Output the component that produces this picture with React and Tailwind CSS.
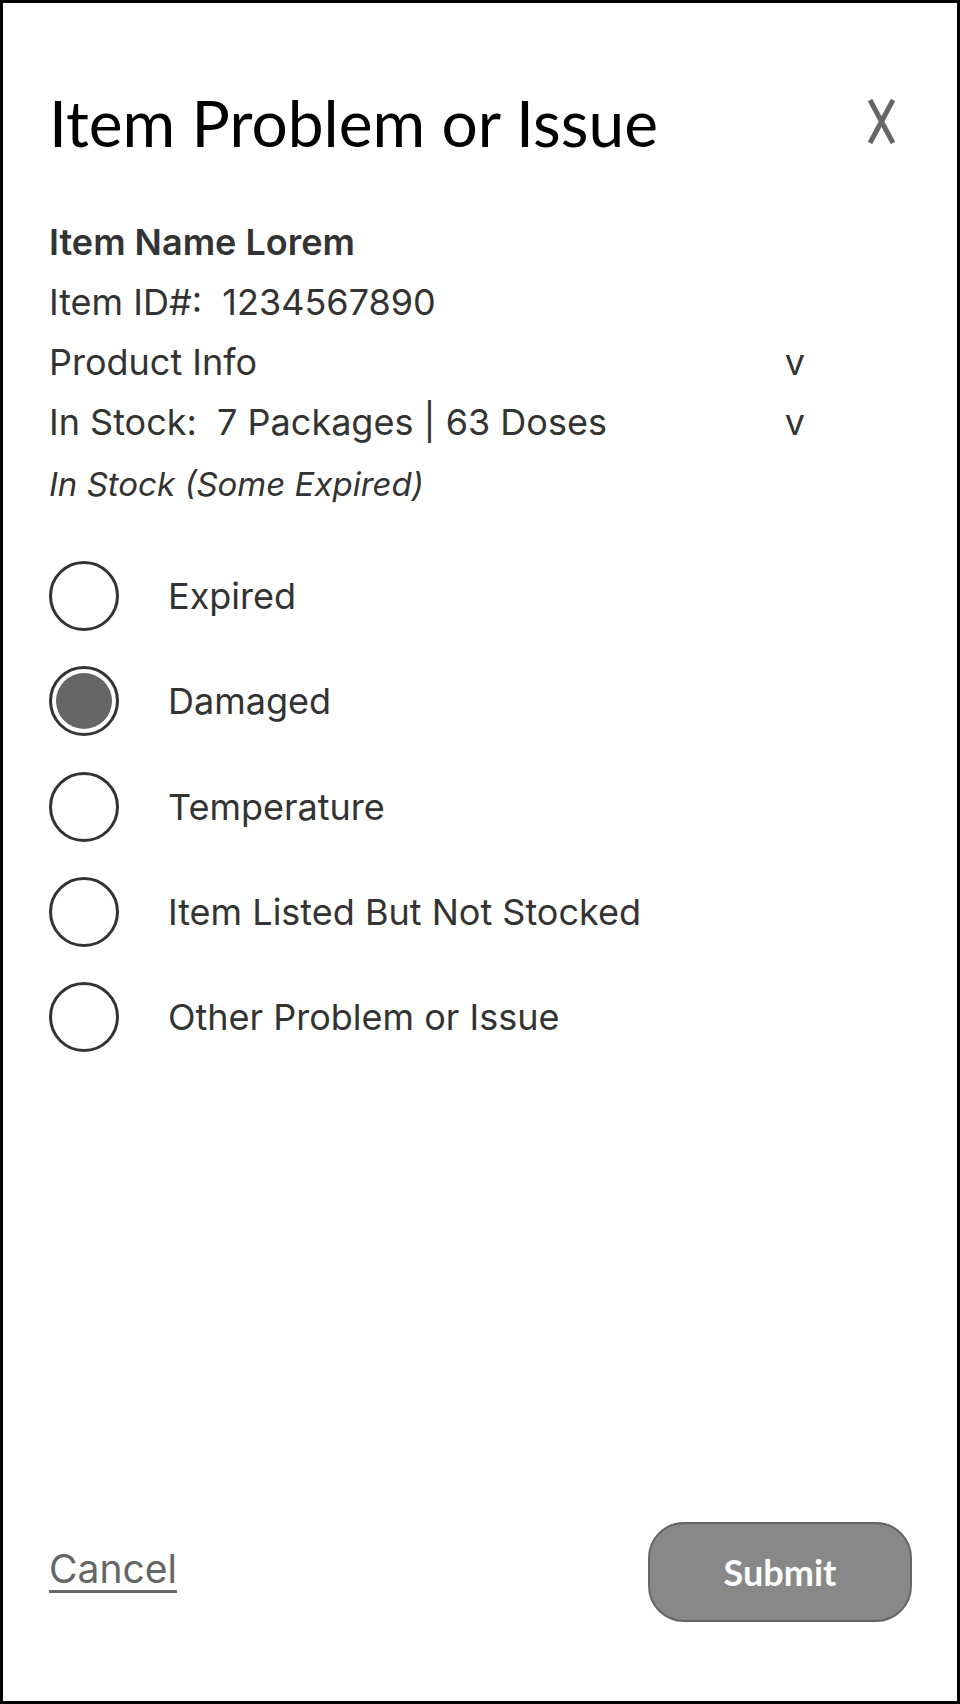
import React from "react";

const options = [
	{ label: "Expired", checked: false },
	{ label: "Damaged", checked: true },
	{ label: "Temperature", checked: false },
	{ label: "Item Listed But Not Stocked", checked: false },
	{ label: "Other Problem or Issue", checked: false },
];

const Radio = ({ checked }) => (
	<div className="w-[70px] h-[70px] shrink-0 rounded-full border-[3px] border-[#333] p-[4px]">
		{checked && <div className="w-full h-full rounded-full bg-[#666]"></div>}
	</div>
);

const App = () => {
	return (
		<div className="w-[960px] h-[1704px] border-[3px] border-black bg-white flex flex-col pl-[46px] pr-[45px] pt-[88px] pb-[79px] text-[#333] font-['Inter','Noto_Sans',sans-serif]">
			{/* Header */}
			<div className="flex justify-between items-start">
				<h1 className="font-['Lato',sans-serif] text-[64px] leading-none text-black">
					Item Problem or Issue
				</h1>
				<svg width="29" height="45" viewBox="0 0 29 45" className="mt-[8px] mr-[16px]">
					<line x1="3" y1="1" x2="26" y2="44" stroke="#666" strokeWidth="5" />
					<line x1="26" y1="1" x2="3" y2="44" stroke="#666" strokeWidth="5" />
				</svg>
			</div>

			{/* Item details */}
			<div className="mt-[57px] text-[36px] leading-[60px]">
				<div className="font-semibold">Item Name Lorem</div>
				<div className="whitespace-pre">Item ID#:  1234567890</div>
				<div className="flex justify-between w-[756px]">
					<span>Product Info</span>
					<span>v</span>
				</div>
				<div className="flex justify-between w-[756px]">
					<span className="whitespace-pre">In Stock:  7 Packages | 63 Doses</span>
					<span>v</span>
				</div>
				<div className="italic text-[33px] leading-[40px] mt-[12px]">In Stock (Some Expired)</div>
			</div>

			{/* Options */}
			<div className="mt-[57px] flex flex-col gap-[35.25px]">
				{options.map((o) => (
					<div key={o.label} className="flex items-center gap-[49px]">
						<Radio checked={o.checked} />
						<span className="text-[36px]">{o.label}</span>
					</div>
				))}
			</div>

			{/* Footer */}
			<div className="mt-auto flex items-center justify-between">
				<a className="text-[39px] leading-none text-[#666] underline decoration-[3px] underline-offset-[7px] mb-[8px]">
					Cancel
				</a>
				<button className="w-[264px] h-[100px] rounded-[36px] bg-[#888] border-[2.5px] border-[#666] text-white font-['Lato',sans-serif] font-bold text-[36px]">
					Submit
				</button>
			</div>
		</div>
	);
};

export default App;
